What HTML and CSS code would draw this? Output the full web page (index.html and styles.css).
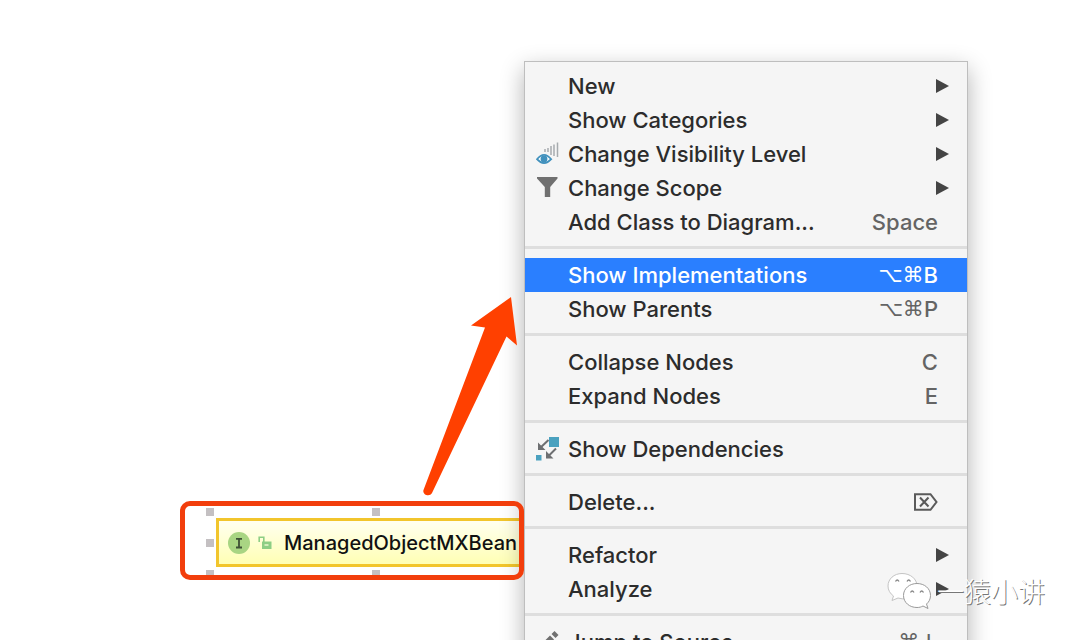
FILE: index.html
```
<!DOCTYPE html>
<html lang="en">

<head>
    <meta charset="UTF-8" />
    <meta name="viewport" content="width=device-width, initial-scale=1.0" />
    <title>Class Diagram</title>
    <link rel="stylesheet" href="styles.css">
</head>

<body>
    <main class="diagram">
        <!-- Selected class node -->
        <div class="node">
            <svg class="interface-icon" viewBox="0 0 22 22" aria-hidden="true">
                <circle cx="11" cy="11" r="11" fill="#a9d583" />
                <path d="M8 6.8h6M8 15.5h6M11 6.8v8.7" stroke="#3d4f35" stroke-width="1.8" />
            </svg>
            <svg class="lock-icon" viewBox="0 0 14 14" aria-hidden="true">
                <path d="M1.2 6V1.2h4.6V6" fill="none" stroke="#8dce84" stroke-width="1.6" />
                <path d="M4 5.5h9.5v7.5H4z" fill="#8dce84" />
                <path d="M6.5 9h4" stroke="#e4f5c8" stroke-width="1.6" />
            </svg>
            <span>ManagedObjectMXBean</span>
        </div>
        <i class="handle handle-tl"></i>
        <i class="handle handle-t"></i>
        <i class="handle handle-l"></i>
        <i class="handle handle-bl"></i>
        <i class="handle handle-b"></i>

        <!-- Context menu -->
        <div class="menu" role="menu">
            <button class="item" role="menuitem"><span class="icon"></span>New<span class="arrow"></span></button>
            <button class="item" role="menuitem"><span class="icon"></span>Show Categories<span class="arrow"></span></button>
            <button class="item" role="menuitem">
                <span class="icon">
                    <svg viewBox="0 0 24 24" aria-hidden="true">
                        <path d="M9 7v3M12 6v4M15 4v9M18 2.5V14M21.5.5V15" stroke="#a6abae" stroke-width="1.5" />
                        <path d="M1 17.2Q8 8.5 15.2 17.2Q8 25 1 17.2z" fill="#f8fbfc" stroke="#4191bd" stroke-width="1.8" />
                        <circle cx="8" cy="17" r="3.4" fill="#4191bd" />
                    </svg>
                </span>Change Visibility Level<span class="arrow"></span>
            </button>
            <button class="item" role="menuitem">
                <span class="icon">
                    <svg viewBox="0 0 24 24" aria-hidden="true">
                        <path d="M1 1H21.5v1.5L14.2 11V21H8.8V11L1 2.5z" fill="#707070" />
                    </svg>
                </span>Change Scope<span class="arrow"></span>
            </button>
            <button class="item" role="menuitem"><span class="icon"></span>Add Class to Diagram...<kbd>Space</kbd></button>
            <hr>
            <button class="item active" role="menuitem"><span class="icon"></span>Show Implementations<kbd><span class="keys">⌥⌘</span>B</kbd></button>
            <button class="item" role="menuitem"><span class="icon"></span>Show Parents<kbd><span class="keys">⌥⌘</span>P</kbd></button>
            <hr>
            <button class="item" role="menuitem"><span class="icon"></span>Collapse Nodes<kbd>C</kbd></button>
            <button class="item" role="menuitem"><span class="icon"></span>Expand Nodes<kbd>E</kbd></button>
            <hr>
            <button class="item" role="menuitem">
                <span class="icon">
                    <svg viewBox="0 0 24 24" aria-hidden="true">
                        <path d="M13 0h10v10H13zM0 18h5.5v5.500H0z" fill="#4aa1bf" />
                        <path d="M12.500 3L3 12M20 11.500L11 20.500" stroke="#6d6f71" stroke-width="2" />
                        <path d="M2 5.500V13h7.500zM10 14v7.500h7.500z" fill="#6d6f71" />
                    </svg>
                </span>Show Dependencies
            </button>
            <hr>
            <button class="item" role="menuitem"><span class="icon"></span>Delete...
                <kbd>
                    <svg class="delete-key" viewBox="0 0 24 18" role="img" aria-label="Forward delete">
                        <path d="M1 1.2h15.5L22.500 9l-6 7.800H1z" fill="none" stroke="#5a5a5a" stroke-width="2" />
                        <path d="M6 4.500l8.500 9M14.500 4.500L6 13.500" stroke="#5a5a5a" stroke-width="2" />
                    </svg>
                </kbd>
            </button>
            <hr>
            <button class="item" role="menuitem"><span class="icon"></span>Refactor<span class="arrow"></span></button>
            <button class="item" role="menuitem"><span class="icon"></span>Analyze<span class="arrow"></span></button>
            <hr>
            <button class="item" role="menuitem">
                <span class="icon">
                    <svg viewBox="0 0 24 24" aria-hidden="true">
                        <path d="M15.500 4l3-3 4 4-3 3zM14 5.500l4 4L7 20.500l-5 1 1-5z" fill="#707070" />
                    </svg>
                </span>Jump to Source<kbd><span class="keys">⌘</span>↓</kbd>
            </button>
        </div>

        <!-- Red annotations -->
        <div class="callout"></div>
        <svg class="pointer" viewBox="0 0 100 200" aria-hidden="true">
            <path d="M91 0L51 28.500L65 30.500L3.500 193C2 197.500 9.500 200.500 12 196L86.500 39.500L97 48.500z" fill="#ff4000" />
        </svg>

        <!-- Account mark -->
        <div class="watermark">
            <svg viewBox="0 0 44 38" aria-hidden="true">
                <path d="M15 1.500C7 1.500 1 7 1 14c0 4 2 7.500 5.500 10L5 28.500l6-2.500c12 3.500 19-4 19-12C30 7 23.500 1.500 15 1.500z" fill="#fff" stroke="#c4c4c4" />
                <path d="M30 11.500c-7.500 0-13.500 5-13.500 12s6 12 13.500 12c2.500 0 4-.5 6-1.500l5 2.500-1.500-4.500c2.500-2 4-5 4-8.500 0-7-6-12-13.500-12z" fill="#fff" stroke="#9a9a9a" />
                <path d="M8.500 9.500q1.700-3 3.500 0M20 9.500q1.700-3 3.500 0M23.500 20.500q1.700-3 3.500 0M33 20.500q1.700-3 3.500 0" fill="none" stroke="#888" stroke-width="1.300" />
            </svg>
            <span lang="zh">一猿小讲</span>
        </div>
    </main>
</body>

</html>
```
FILE: styles.css
```
body {
    margin: 0;
    font-family: Inter, 'Open Sans', sans-serif;
    background-color: #ffffff;
}

.diagram {
    position: relative;
    height: 100vh;
    overflow: hidden;
}

/* Class node */
.node {
    position: absolute;
    left: 216px;
    top: 518px;
    display: flex;
    align-items: center;
    box-sizing: border-box;
    height: 49px;
    padding: 0 20px 0 9px;
    border: 3px solid #f2c52c;
    background: linear-gradient(#fffff0, #ffffb4);
    color: #111111;
    font-size: 20px;
    font-weight: 500;
    white-space: nowrap;
}

.interface-icon {
    width: 22px;
    height: 22px;
    margin-right: 8px;
}

.lock-icon {
    width: 14px;
    height: 14px;
    margin-right: 12px;
}

.handle {
    position: absolute;
    width: 8px;
    height: 8px;
    background-color: #c4c0c2;
}

.handle-tl {
    left: 206px;
    top: 508px;
}

.handle-t {
    left: 372px;
    top: 508px;
}

.handle-l {
    left: 206px;
    top: 539px;
}

.handle-bl {
    left: 206px;
    top: 570px;
}

.handle-b {
    left: 372px;
    top: 570px;
}

/* Context menu */
.menu {
    position: absolute;
    left: 524px;
    top: 61px;
    box-sizing: border-box;
    min-width: 444px;
    padding: 7px 0;
    border: 1px solid #bebebe;
    background-color: #f5f5f5;
    box-shadow: 0 8px 22px rgba(0, 0, 0, 0.3);
}

.item {
    display: flex;
    align-items: center;
    width: 100%;
    height: 34px;
    padding: 0 29px 0 11px;
    border: none;
    background: none;
    color: #2c2c2c;
    font-family: inherit;
    font-size: 22px;
    font-weight: 500;
    text-align: left;
    white-space: nowrap;
}

.item.active {
    background-color: #2a7fff;
    color: #ffffff;
}

.icon {
    display: flex;
    width: 24px;
    height: 24px;
    margin-right: 8px;
}

.icon svg {
    width: 24px;
    height: 24px;
}

.arrow {
    margin-left: auto;
    margin-right: -11px;
    border-left: 13px solid #444444;
    border-top: 7px solid transparent;
    border-bottom: 7px solid transparent;
}

kbd {
    display: flex;
    align-items: center;
    margin-left: auto;
    color: #646464;
    font-family: inherit;
}

.active kbd {
    color: #ffffff;
}

.keys {
    font-family: 'DejaVu Sans', sans-serif;
    font-size: 21px;
}

.delete-key {
    width: 24px;
    height: 18px;
}

.menu hr {
    height: 3px;
    margin: 7px 0 9px;
    border: none;
    background-color: #dedede;
}

/* Annotations */
.callout {
    position: absolute;
    left: 180px;
    top: 501px;
    box-sizing: border-box;
    width: 344px;
    height: 79px;
    border: 5px solid #f23e0c;
    border-radius: 10px;
}

.pointer {
    position: absolute;
    left: 420px;
    top: 297px;
    width: 100px;
    height: 200px;
}

.watermark {
    position: absolute;
    left: 887px;
    top: 571px;
    display: flex;
    align-items: center;
    gap: 6px;
    color: #ffffff;
    font-family: 'Noto Sans CJK SC', sans-serif;
    font-size: 27px;
    font-weight: 300;
    line-height: 40px;
    text-shadow: 1px 1px 0 #777777;
}

.watermark svg {
    width: 44px;
    height: 38px;
}
```
